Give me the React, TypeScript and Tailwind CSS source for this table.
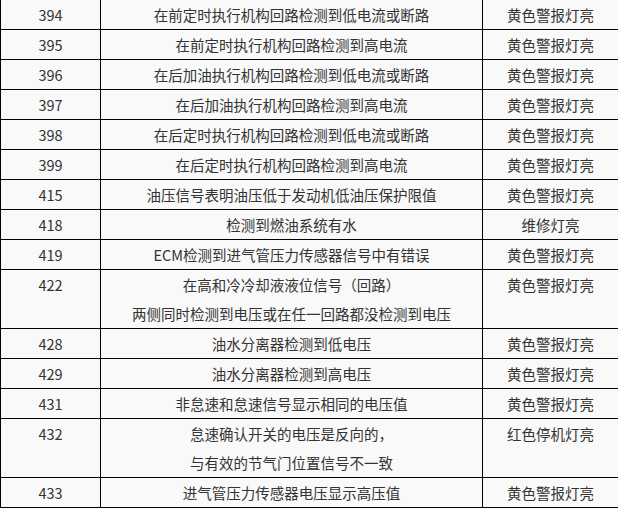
const rows: { code: string; desc: string[]; lamp: string }[] = [
  { code: '394', desc: ['在前定时执行机构回路检测到低电流或断路'], lamp: '黄色警报灯亮' },
  { code: '395', desc: ['在前定时执行机构回路检测到高电流'], lamp: '黄色警报灯亮' },
  { code: '396', desc: ['在后加油执行机构回路检测到低电流或断路'], lamp: '黄色警报灯亮' },
  { code: '397', desc: ['在后加油执行机构回路检测到高电流'], lamp: '黄色警报灯亮' },
  { code: '398', desc: ['在后定时执行机构回路检测到低电流或断路'], lamp: '黄色警报灯亮' },
  { code: '399', desc: ['在后定时执行机构回路检测到高电流'], lamp: '黄色警报灯亮' },
  { code: '415', desc: ['油压信号表明油压低于发动机低油压保护限值'], lamp: '黄色警报灯亮' },
  { code: '418', desc: ['检测到燃油系统有水'], lamp: '维修灯亮' },
  { code: '419', desc: ['ECM检测到进气管压力传感器信号中有错误'], lamp: '黄色警报灯亮' },
  {
    code: '422',
    desc: ['在高和冷冷却液液位信号（回路）', '两侧同时检测到电压或在任一回路都没检测到电压'],
    lamp: '黄色警报灯亮',
  },
  { code: '428', desc: ['油水分离器检测到低电压'], lamp: '黄色警报灯亮' },
  { code: '429', desc: ['油水分离器检测到高电压'], lamp: '黄色警报灯亮' },
  { code: '431', desc: ['非怠速和怠速信号显示相同的电压值'], lamp: '黄色警报灯亮' },
  {
    code: '432',
    desc: ['怠速确认开关的电压是反向的，', '与有效的节气门位置信号不一致'],
    lamp: '红色停机灯亮',
  },
  { code: '433', desc: ['进气管压力传感器电压显示高压值'], lamp: '黄色警报灯亮' },
];

export default function App() {
  return (
    <div
      lang="zh-CN"
      className="w-[618px] h-[509px] overflow-hidden bg-[#f9f9f9] text-[#333333]"
      style={{ fontFamily: '"Noto Sans CJK SC", "Noto Sans", sans-serif' }}
    >
      <table className="w-[618px] border-collapse table-fixed text-[14.5px] leading-[29px] -mt-px">
        <colgroup>
          <col className="w-[100px]" />
          <col className="w-[382px]" />
          <col className="w-[136px]" />
        </colgroup>
        <tbody>
          {rows.map((r) => (
            <tr key={r.code}>
              <td className="border border-black text-center align-top">{r.code}</td>
              <td className="border border-black text-center align-top">
                {r.desc.map((d) => (
                  <div key={d}>{d}</div>
                ))}
              </td>
              <td className="border border-black text-center align-top">{r.lamp}</td>
            </tr>
          ))}
        </tbody>
      </table>
    </div>
  );
}
